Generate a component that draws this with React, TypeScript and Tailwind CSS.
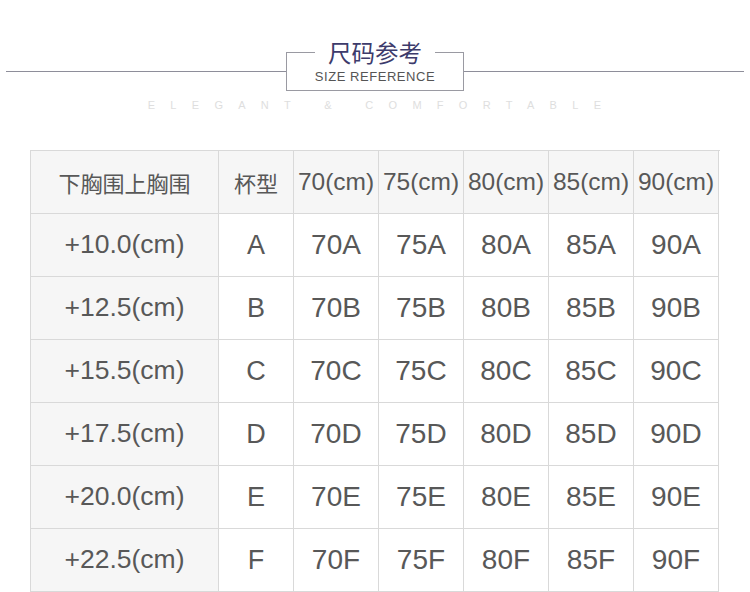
import React from "react";

const cols = ["70", "75", "80", "85", "90"];
const rows = [
  ["+10.0(cm)", "A"],
  ["+12.5(cm)", "B"],
  ["+15.5(cm)", "C"],
  ["+17.5(cm)", "D"],
  ["+20.0(cm)", "E"],
  ["+22.5(cm)", "F"],
];

const font = { fontFamily: '"Liberation Sans", "Noto Sans CJK SC", Arial, sans-serif' };

export default function App() {
  const cell = "flex items-center justify-center border-r border-b border-[#d9d9d9] h-[63px] text-[#585858]";
  return (
    <div className="w-[750px] h-[592px] bg-white overflow-hidden pt-[52px]" style={font}>
      <div className="flex items-center px-[6px]">
        <div className="flex-1 h-px bg-[#8e8e9a]" />
        <div className="w-[178px] h-[39px] border-x border-b border-[#9a9aa2] flex flex-col items-center">
          <div className="-mt-[12px] h-[24px] w-full flex items-center">
            <div className="flex-1 h-px bg-[#9a9aa2]" />
            <div className="px-[13px] text-[23.5px] leading-[24px] text-[#3d3b6b]" style={{ fontFamily: '"Noto Sans CJK SC", sans-serif' }}>
              尺码参考
            </div>
            <div className="flex-1 h-px bg-[#9a9aa2]" />
          </div>
          <div className="mt-[5px] text-[13px] leading-[16px] tracking-[0.55px] text-[#555]">SIZE REFERENCE</div>
        </div>
        <div className="flex-1 h-px bg-[#8e8e9a]" />
      </div>
      <div className="mt-[9px] h-[11px] flex justify-center text-[11px] leading-[11px] text-[#dedede] tracking-[15.3px] pl-[14px]">
        ELEGANT &amp; COMFORTABLE
      </div>
      <div className="mt-[39px] ml-[30px] w-[690px] border-l border-t border-[#d9d9d9] grid grid-cols-[188px_75px_repeat(5,85px)]">
        <div className={`${cell} bg-[#f6f6f6] text-[22px]`} style={{ fontFamily: '"Noto Sans CJK SC", sans-serif' }}>下胸围上胸围</div>
        <div className={`${cell} bg-[#f6f6f6] text-[22px]`} style={{ fontFamily: '"Noto Sans CJK SC", sans-serif' }}>杯型</div>
        {cols.map((c) => (
          <div key={c} className={`${cell} bg-[#f6f6f6] text-[24.5px]`}>{c}(cm)</div>
        ))}
        {rows.map(([label, cup]) => (
          <React.Fragment key={cup}>
            <div className={`${cell} bg-[#f6f6f6] text-[26.5px]`}>{label}</div>
            <div className={`${cell} bg-white text-[27px]`}>{cup}</div>
            {cols.map((c) => (
              <div key={c} className={`${cell} bg-white text-[28px]`}>{c}{cup}</div>
            ))}
          </React.Fragment>
        ))}
      </div>
    </div>
  );
}
